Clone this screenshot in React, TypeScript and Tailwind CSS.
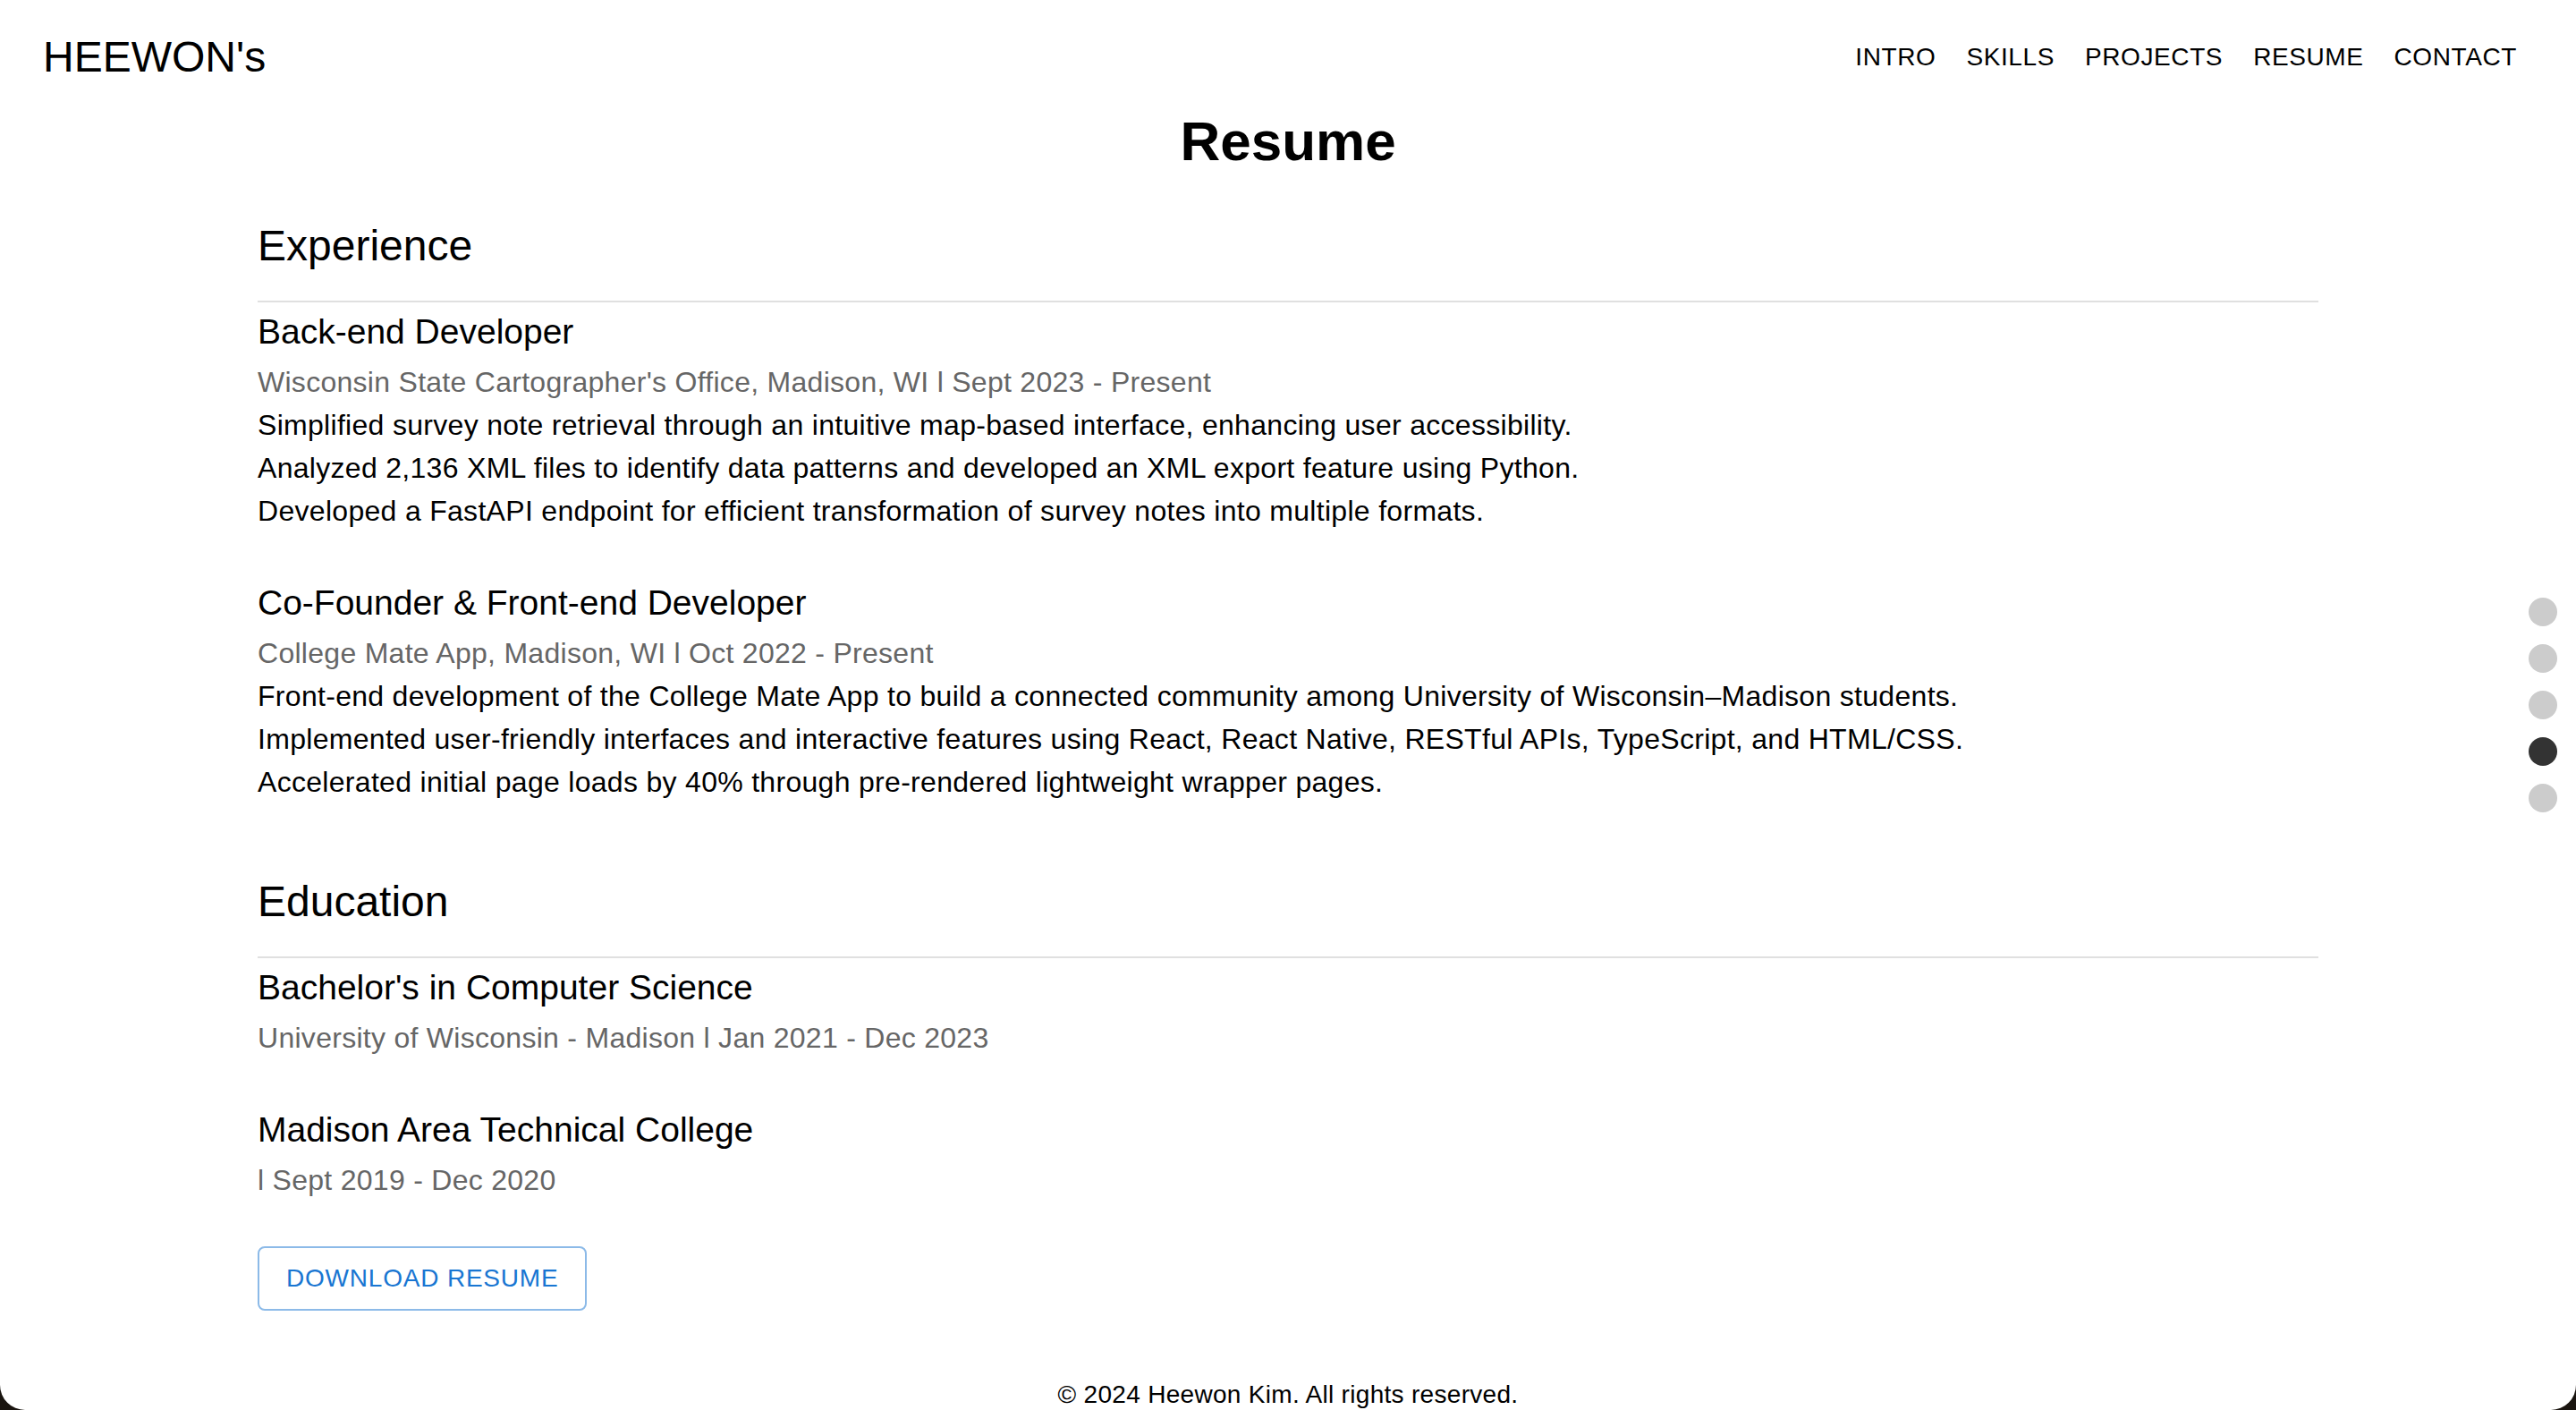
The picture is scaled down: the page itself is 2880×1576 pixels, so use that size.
type Entry = {
  title: string;
  meta: string;
  points?: string[];
};

const navItems = ["INTRO", "SKILLS", "PROJECTS", "RESUME", "CONTACT"];

const experience: Entry[] = [
  {
    title: "Back-end Developer",
    meta: "Wisconsin State Cartographer's Office, Madison, WI l Sept 2023 - Present",
    points: [
      "Simplified survey note retrieval through an intuitive map-based interface, enhancing user accessibility.",
      "Analyzed 2,136 XML files to identify data patterns and developed an XML export feature using Python.",
      "Developed a FastAPI endpoint for efficient transformation of survey notes into multiple formats.",
    ],
  },
  {
    title: "Co-Founder & Front-end Developer",
    meta: "College Mate App, Madison, WI l Oct 2022 - Present",
    points: [
      "Front-end development of the College Mate App to build a connected community among University of Wisconsin\u2013Madison students.",
      "Implemented user-friendly interfaces and interactive features using React, React Native, RESTful APIs, TypeScript, and HTML/CSS.",
      "Accelerated initial page loads by 40% through pre-rendered lightweight wrapper pages.",
    ],
  },
];

const education: Entry[] = [
  {
    title: "Bachelor's in Computer Science",
    meta: "University of Wisconsin - Madison l Jan 2021 - Dec 2023",
  },
  {
    title: "Madison Area Technical College",
    meta: "l Sept 2019 - Dec 2020",
  },
];

const ResumeItem = ({ entry, first }: { entry: Entry; first: boolean }) => (
  <div className={first ? "mt-[9px]" : "mt-[55px]"}>
    <h3 className="text-[39px] leading-[48px] text-black">{entry.title}</h3>
    <p className="mt-[8px] text-[32px] leading-[48px] tracking-[0.28px] text-[#666666]">{entry.meta}</p>
    {entry.points?.map((point) => (
      <p key={point} className="text-[32px] leading-[48px] tracking-[0.3px] text-black">
        {point}
      </p>
    ))}
  </div>
);

const Section = ({ heading, entries, className }: { heading: string; entries: Entry[]; className: string }) => (
  <section className={className}>
    <h2 className="text-[48px] leading-[56px] text-black">{heading}</h2>
    <div className="mt-[33px] h-[2px] w-full bg-[#e0e0e0]" />
    {entries.map((entry, i) => (
      <ResumeItem key={entry.title} entry={entry} first={i === 0} />
    ))}
  </section>
);

export default function App() {
  return (
    <div className="min-h-screen bg-[#1a1510]" style={{ fontFamily: '"Liberation Sans", Arial, sans-serif' }}>
      <div className="relative h-[1576px] overflow-hidden rounded-b-[28px] bg-white">
        <header className="flex h-[128px] items-center justify-between pl-[48px] pr-[66px]">
          <span className="text-[48px] leading-none text-black">HEEWON's</span>
          <nav className="flex items-center gap-[34px]">
            {navItems.map((item) => (
              <span key={item} className="text-[28px] leading-none tracking-[0.6px] text-black">
                {item}
              </span>
            ))}
          </nav>
        </header>

        <h1 className="text-center text-[62px] font-bold leading-[60px] text-black">Resume</h1>

        <main className="mx-auto w-[2304px]">
          <Section heading="Experience" entries={experience} className="mt-[59px]" />
          <Section heading="Education" entries={education} className="mt-[82px]" />

          <button className="mt-[50px] flex h-[72px] items-center rounded-[8px] border-2 border-[#8cbae8] px-[30px] text-[28px] tracking-[0.8px] text-[#1976d2]">
            DOWNLOAD RESUME
          </button>
        </main>

        <footer className="mt-[74px] text-center text-[28px] leading-[40px] tracking-[0.3px] text-black">
          © 2024 Heewon Kim. All rights reserved.
        </footer>

        <div className="absolute right-[21px] top-1/2 flex -translate-y-1/2 flex-col gap-[20px]">
          {[0, 1, 2, 3, 4].map((i) => (
            <span
              key={i}
              className={`block h-[32px] w-[32px] rounded-full ${i === 3 ? "bg-[#333333]" : "bg-[#cccccc]"}`}
            />
          ))}
        </div>
      </div>
    </div>
  );
}
